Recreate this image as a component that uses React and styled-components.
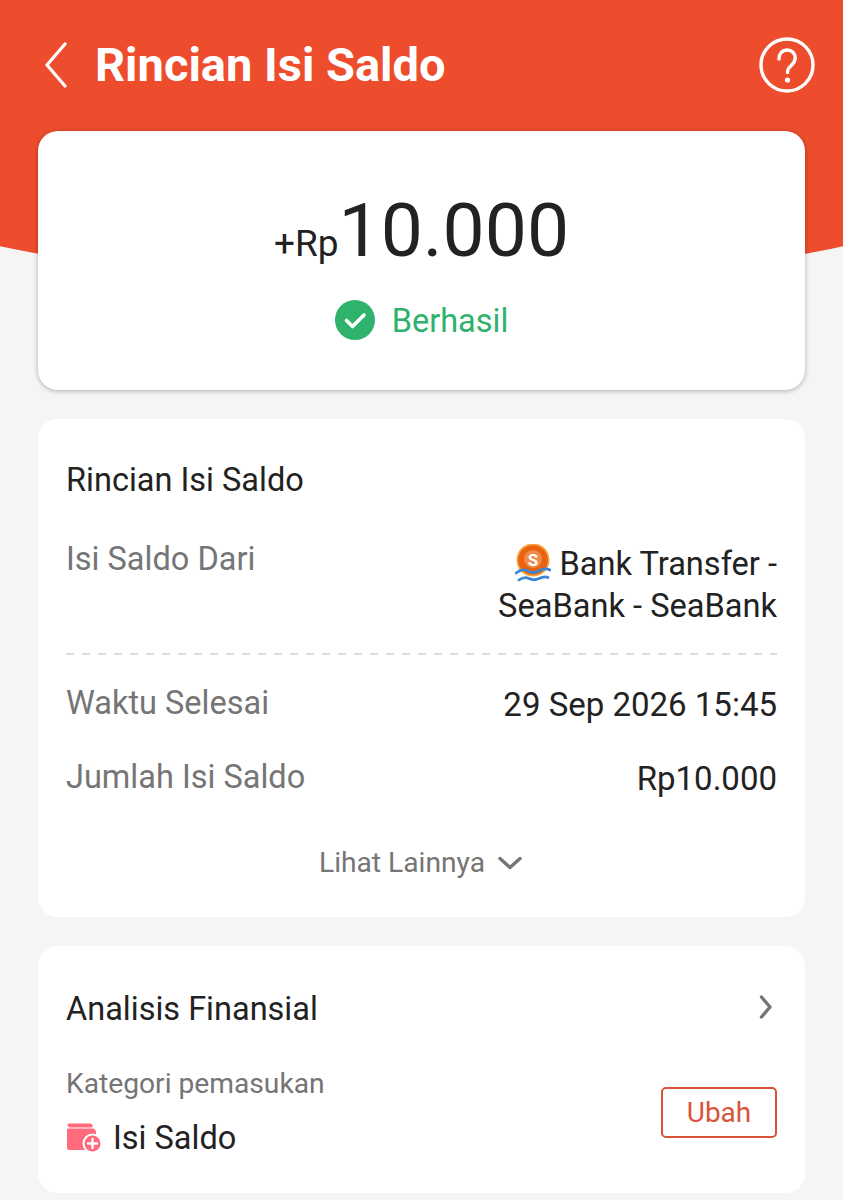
import React from 'react';
import styled, { createGlobalStyle } from 'styled-components';

const GlobalStyle = createGlobalStyle`
  html, body {
    margin: 0;
    padding: 0;
    background: #f5f5f5;
    font-family: Roboto, "Noto Sans", sans-serif;
  }
`;

const App = () => (
  <>
    <GlobalStyle />
    <Page>
      <TopBar>
        <BackIcon viewBox="0 0 24 46" fill="none">
          <path d="M21 2 L3 23 L21 44" stroke="#fff" strokeWidth="3.2" strokeLinecap="round" strokeLinejoin="round" />
        </BackIcon>
        <PageTitle>Rincian Isi Saldo</PageTitle>
        <HelpIcon viewBox="0 0 56 56" fill="none">
          <circle cx="28" cy="28" r="26" stroke="#fff" strokeWidth="3.4" />
          <path d="M20 22c0-5.500 3.400-9 8.200-9 4.700 0 8 3.400 8 8 0 3.600-1.800 5.600-4.200 7.700-2.400 2-3.500 3.400-3.500 6.800" stroke="#fff" strokeWidth="3.4" strokeLinecap="round" />
          <circle cx="28.500" cy="43" r="2.600" fill="#fff" />
        </HelpIcon>
      </TopBar>

      <HeroCard>
        <Amount>
          <Currency>+Rp</Currency>
          <AmountValue>10.000</AmountValue>
        </Amount>
        <Status>
          <svg width="40" height="40" viewBox="0 0 40 40">
            <circle cx="20" cy="20" r="20" fill="#2eb26c" />
            <path d="M11.500 20.500 L17.500 26.500 L29 15" fill="none" stroke="#fff" strokeWidth="3.600" strokeLinecap="round" strokeLinejoin="round" />
          </svg>
          <StatusText>Berhasil</StatusText>
        </Status>
      </HeroCard>

      <DetailCard>
        <CardTitle>Rincian Isi Saldo</CardTitle>
        <SourceRow>
          <RowLabel>Isi Saldo Dari</RowLabel>
          <SourceValue>
            <SeaBankLogo viewBox="0 0 36 38">
              <circle cx="18" cy="16" r="16.500" fill="#f7a23b" />
              <circle cx="18" cy="16" r="14.800" fill="#e8630f" />
              <circle cx="18" cy="15" r="9" fill="#f08a4b" />
              <text x="18" y="21.500" textAnchor="middle" fontFamily="Roboto, sans-serif" fontWeight="700" fontSize="17" fill="#fff">S</text>
              <path d="M1 29c5-4 8-4 12-2s8 2 11 0 7-3 11-1" fill="none" stroke="#3d86d6" strokeWidth="2.800" strokeLinecap="round" />
              <path d="M4 36c4-3 7-3 10-1.500s7 1.500 10 0 6-2.500 9-1" fill="none" stroke="#3d86d6" strokeWidth="2.800" strokeLinecap="round" />
            </SeaBankLogo>
            Bank Transfer -<br />SeaBank - SeaBank
          </SourceValue>
        </SourceRow>
        <DashedLine />
        <InfoRow>
          <RowLabel>Waktu Selesai</RowLabel>
          <RowValue>29 Sep 2026 15:45</RowValue>
        </InfoRow>
        <InfoRow>
          <RowLabel>Jumlah Isi Saldo</RowLabel>
          <RowValue>Rp10.000</RowValue>
        </InfoRow>
        <MoreLink>
          Lihat Lainnya
          <svg width="28" height="16" viewBox="0 0 28 16" fill="none">
            <path d="M4 3.500 L14 12.500 L24 3.500" stroke="#757575" strokeWidth="3.400" strokeLinecap="round" strokeLinejoin="round" />
          </svg>
        </MoreLink>
      </DetailCard>

      <AnalysisCard>
        <AnalysisHead>
          <CardTitle>Analisis Finansial</CardTitle>
          <ForwardIcon viewBox="0 0 16 28" fill="none">
            <path d="M4.500 4 L13 14 L4.500 24" stroke="#757575" strokeWidth="3.400" strokeLinecap="round" strokeLinejoin="round" />
          </ForwardIcon>
        </AnalysisHead>
        <AnalysisBody>
          <div>
            <CategoryLabel>Kategori pemasukan</CategoryLabel>
            <Category>
              <svg width="36" height="30" viewBox="0 0 36 30">
                <path d="M3 0.500h21a2.500 2.500 0 0 1 2.500 2.500v1.500H2.500V3A1 1 0 0 1 3 0.500z" fill="#ff6b7d" />
                <path d="M2 5.500h24a4 4 0 0 1 4 4V27H3.500A2.500 2.500 0 0 1 1 24.500V6.500a1 1 0 0 1 1-1z" fill="#ff6b7d" />
                <circle cx="26.500" cy="20.500" r="9" fill="#ff6b7d" stroke="#fff" strokeWidth="2" />
                <path d="M26.500 16v9M22 20.500h9" stroke="#fff" strokeWidth="2.400" strokeLinecap="round" />
              </svg>
              <CategoryName>Isi Saldo</CategoryName>
            </Category>
          </div>
          <EditButton>Ubah</EditButton>
        </AnalysisBody>
      </AnalysisCard>
    </Page>
  </>
);

const Page = styled.div`
  position: relative;
  width: 843px;
  height: 1200px;
  overflow: hidden;
  box-sizing: border-box;
  padding: 0 38px;
  background: #f5f5f5;

  /* curved orange backdrop behind the first card */
  &::before {
    content: '';
    position: absolute;
    left: -1678px;
    bottom: 911px;
    width: 4200px;
    height: 4200px;
    border-radius: 50%;
    background: #ee4d2d;
  }
`;

const TopBar = styled.header`
  position: relative;
  height: 131px;
  display: flex;
  align-items: center;
  padding-bottom: 2px;
  box-sizing: border-box;
`;

const BackIcon = styled.svg`
  width: 24px;
  height: 46px;
  margin-left: 6px;
  flex: none;
`;

const PageTitle = styled.h1`
  margin: 0 0 0 27px;
  flex: 1;
  font-size: 47px;
  line-height: 56px;
  font-weight: 700;
  color: #fff;
`;

const HelpIcon = styled.svg`
  width: 56px;
  height: 56px;
  margin-right: -10px;
  flex: none;
`;

const Card = styled.section`
  position: relative;
  background: #fff;
  border-radius: 20px;
  box-sizing: border-box;
`;

const HeroCard = styled(Card)`
  height: 259px;
  padding-top: 58px;
  box-shadow: 0 1px 5px rgba(0, 0, 0, 0.3);
  display: flex;
  flex-direction: column;
  align-items: center;
`;

const Amount = styled.div`
  display: flex;
  align-items: baseline;
  color: #222;
  line-height: 82px;
`;

const Currency = styled.span`
  font-size: 37px;
`;

const AmountValue = styled.span`
  font-size: 75px;
`;

const Status = styled.div`
  display: flex;
  align-items: center;
  gap: 17px;
  margin-top: 14px;
`;

const StatusText = styled.span`
  font-size: 32.500px;
  line-height: 40px;
  padding-top: 2px;
  color: #2eb26c;
`;

const DetailCard = styled(Card)`
  margin-top: 29px;
  height: 498px;
  padding: 41px 28px 0;
`;

const CardTitle = styled.h2`
  margin: 0;
  font-size: 32.500px;
  line-height: 40px;
  font-weight: 400;
  color: #222;
`;

const SourceRow = styled.div`
  display: flex;
  justify-content: space-between;
  align-items: flex-start;
  margin-top: 39px;
`;

const RowLabel = styled.span`
  font-size: 32.500px;
  line-height: 40px;
  color: #757575;
`;

const SourceValue = styled.div`
  text-align: right;
  font-size: 32.600px;
  line-height: 42px;
  color: #222;
  margin-top: 4px;
`;

const SeaBankLogo = styled.svg`
  width: 36px;
  height: 38px;
  vertical-align: -7px;
  margin-right: 9px;
`;

const DashedLine = styled.div`
  margin-top: 26px;
  height: 2px;
  background: repeating-linear-gradient(90deg, #dcdcdc 0 8px, transparent 8px 16px);
`;

const InfoRow = styled.div`
  display: flex;
  justify-content: space-between;
  margin-top: 28px;
  & + & {
    margin-top: 32px;
  }
`;

const RowValue = styled.span`
  font-size: 33px;
  line-height: 40px;
  color: #222;
  margin-top: 2px;
`;

const MoreLink = styled.div`
  display: flex;
  justify-content: center;
  align-items: center;
  gap: 11px;
  margin-top: 46px;
  font-size: 28.200px;
  line-height: 36px;
  color: #757575;
`;

const AnalysisCard = styled(Card)`
  margin-top: 29px;
  height: 247px;
  padding: 43px 28px 0;
`;

const AnalysisHead = styled.div`
  display: flex;
  justify-content: space-between;
  align-items: center;
  padding-right: 4px;
`;

const ForwardIcon = styled.svg`
  width: 16px;
  height: 28px;
  margin-bottom: 5px;
`;

const AnalysisBody = styled.div`
  display: flex;
  justify-content: space-between;
  align-items: flex-end;
  margin-top: 37px;
`;

const CategoryLabel = styled.div`
  font-size: 28.200px;
  line-height: 36px;
  color: #757575;
`;

const Category = styled.div`
  display: flex;
  align-items: center;
  gap: 11px;
  margin-top: 16px;
`;

const CategoryName = styled.span`
  font-size: 32.500px;
  line-height: 40px;
  color: #222;
`;

const EditButton = styled.button`
  width: 116px;
  height: 51px;
  margin-bottom: 20px;
  border: 2px solid #d9533a;
  border-radius: 5px;
  background: #fff;
  color: #d9533a;
  font-family: inherit;
  font-size: 28px;
  padding: 0;
`;

export default App;
